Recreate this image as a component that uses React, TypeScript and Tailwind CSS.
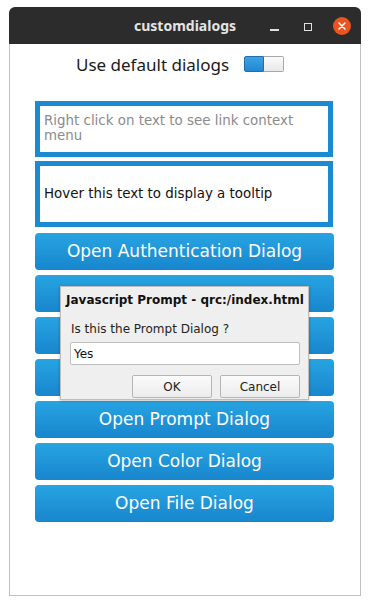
import React from "react";

const btnCls =
  "h-[37px] w-[299px] rounded-[4px] bg-gradient-to-b from-[#27a4e2] to-[#1886cd] text-white text-[17px] flex items-center justify-center leading-none";

export default function App() {
  const buttons = [
    "Open Authentication Dialog",
    "",
    "",
    "",
    "Open Prompt Dialog",
    "Open Color Dialog",
    "Open File Dialog",
  ];
  return (
    <div className="w-[370px] h-[605px] bg-white pl-[9px] pt-[7px]" style={{ fontFamily: "'DejaVu Sans', sans-serif" }}>
      <div className="w-[352px] h-[589px] flex flex-col">
        <div className="h-[37px] rounded-t-[6px] bg-[#2c2c2c] relative flex items-center justify-center">
          <span className="text-[#e4e4e4] text-[14px] font-bold" style={{ fontFamily: "'Noto Sans', sans-serif" }}>
            customdialogs
          </span>
          <div className="absolute left-[261px] top-[22px] w-[9px] h-[1.5px] bg-[#e0e0e0]" />
          <div className="absolute left-[295px] top-[16px] w-[8px] h-[8px] border border-[#e0e0e0]" />
          <div className="absolute left-[324px] top-[10px] w-[18px] h-[18px] rounded-full bg-[#e95420] flex items-center justify-center">
            <svg width="10" height="10" viewBox="0 0 10 10">
              <path d="M2 2L8 8M8 2L2 8" stroke="white" strokeWidth="1.5" strokeLinecap="round" />
            </svg>
          </div>
        </div>
        <div className="flex-1 border-x border-b border-[#c2c2c2] relative">
          <div className="flex items-center h-[16px] mt-[12px] pl-[66px]">
            <span className="text-[17px] text-[#1a1a1a] leading-none" style={{ fontFamily: "'Noto Sans', sans-serif" }}>
              Use default dialogs
            </span>
            <div className="ml-[15px] flex w-[40px] h-[16px]">
              <div className="w-[20px] h-[16px] bg-gradient-to-b from-[#3ea2e4] to-[#2287d2] border border-[#1e6fae] rounded-l-[2px]" />
              <div className="w-[20px] h-[16px] bg-gradient-to-b from-[#fafafa] to-[#e8e8e8] border border-[#a8a8a8] border-l-0 rounded-r-[2px]" />
            </div>
          </div>
          <div className="ml-[25px] mt-[29px] w-[298px] flex flex-col gap-[4px]">
            <div className="h-[56px] border-[5px] border-[#1a8bd0] pl-[4px] pt-[7px]">
              <p className="text-[#8a8a8a] text-[13.4px] leading-[15px]">Right click on text to see link context menu</p>
            </div>
            <div className="h-[66px] border-[5px] border-[#1a8bd0] pl-[4px] flex items-center">
              <p className="text-[#111] text-[13.4px]">Hover this text to display a tooltip</p>
            </div>
          </div>
          <div className="ml-[25px] mt-[6px] flex flex-col gap-[5px]">
            {buttons.map((b, i) => (
              <div key={i} className={btnCls}>
                {b}
              </div>
            ))}
          </div>
          <div className="absolute left-[50px] top-[242px] w-[249px] h-[114px] bg-[#efefef] border border-[#bdbdbd] shadow-[0_1px_3px_rgba(0,0,0,0.25)] px-[5px] flex flex-col">
            <div className="text-[12px] font-bold text-[#111] mt-[5px] leading-[16px] whitespace-nowrap">
              Javascript Prompt - qrc:/index.html
            </div>
            <div className="text-[12px] text-[#222] mt-[13px] ml-[5px] leading-[16px] whitespace-nowrap">Is this the Prompt Dialog ?</div>
            <div className="ml-[4px] mt-[5px] w-[230px] h-[23px] bg-white border border-[#bdbdbd] rounded-[2px] flex items-center pl-[3px] text-[12px] text-[#111]">
              Yes
            </div>
            <div className="flex justify-end gap-[8px] mt-[10px] pr-[3px]">
              <div className="w-[80px] h-[23px] border border-[#b5b5b5] rounded-[2px] bg-gradient-to-b from-[#fbfbfb] to-[#ececec] text-[12px] text-[#222] flex items-center justify-center">OK</div>
              <div className="w-[80px] h-[23px] border border-[#b5b5b5] rounded-[2px] bg-gradient-to-b from-[#fbfbfb] to-[#ececec] text-[12px] text-[#222] flex items-center justify-center">Cancel</div>
            </div>
          </div>
        </div>
      </div>
    </div>
  );
}
